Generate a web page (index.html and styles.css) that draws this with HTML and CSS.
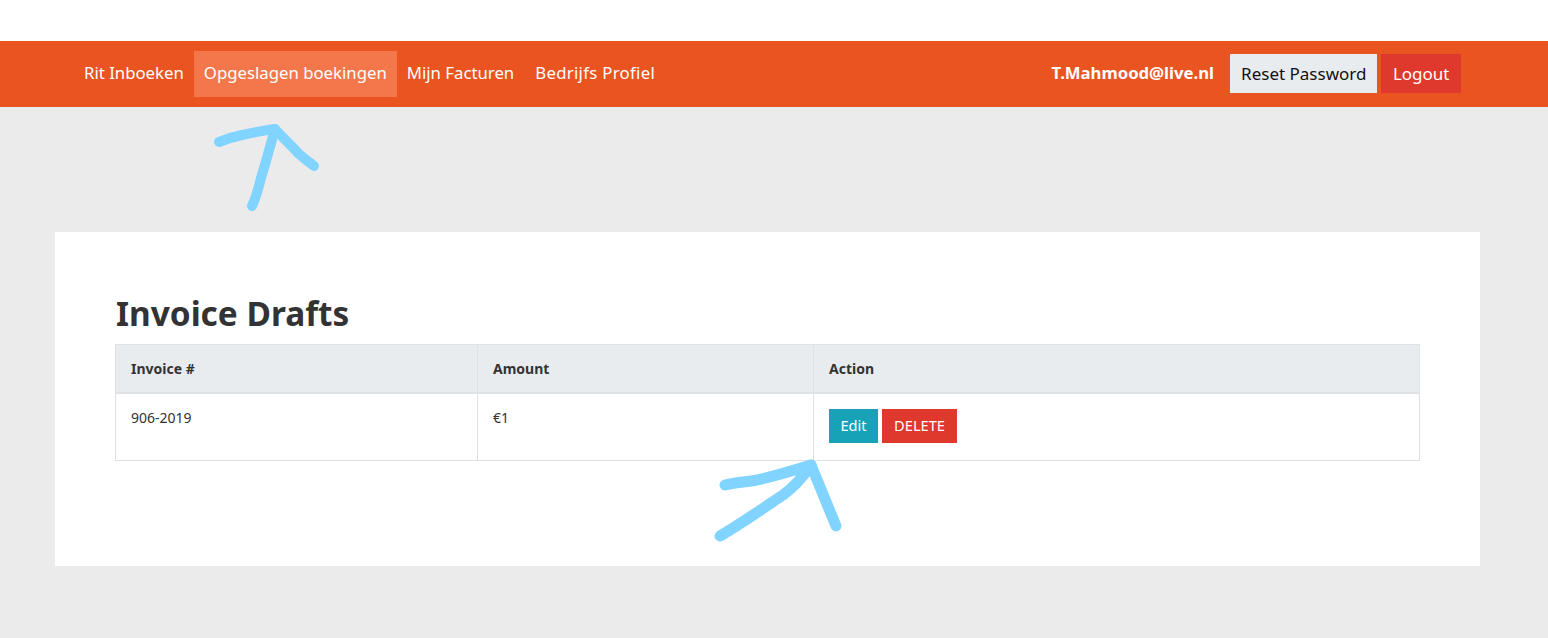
FILE: index.html
```html
<!DOCTYPE html>
<html lang="nl">
<head>
<meta charset="utf-8">
<title>Invoice Drafts</title>
<link rel="stylesheet" href="styles.css">
</head>
<body>
<div class="topstrip"></div>
<nav class="navbar">
  <ul class="nav-links">
    <li><a class="nav-link" href="#">Rit Inboeken</a></li>
    <li><a class="nav-link active" href="#">Opgeslagen boekingen</a></li>
    <li><a class="nav-link" href="#">Mijn Facturen</a></li>
    <li><a class="nav-link nav-link-wide" href="#">Bedrijfs Profiel</a></li>
  </ul>
  <div class="nav-user">
    <strong class="user-email">T.Mahmood@live.nl</strong>
    <button class="btn btn-reset">Reset Password</button>
    <button class="btn btn-logout">Logout</button>
  </div>
</nav>
<main class="page">
  <section class="card">
    <h1 class="title">Invoice Drafts</h1>
    <table class="table">
      <colgroup>
        <col class="col-invoice"><col class="col-amount"><col>
      </colgroup>
      <thead>
        <tr><th>Invoice #</th><th>Amount</th><th>Action</th></tr>
      </thead>
      <tbody>
        <tr>
          <td>906-2019</td>
          <td>€1</td>
          <td class="actions">
            <button class="btn-sm btn-edit">Edit</button>
            <button class="btn-sm btn-delete">DELETE</button>
          </td>
        </tr>
      </tbody>
    </table>
  </section>
</main>
<svg class="annotation" width="1548" height="638" viewBox="0 0 1548 638" fill="none" stroke="#80d4ff" stroke-linecap="round" stroke-linejoin="round" stroke-width="10" aria-hidden="true">
  <path d="M219 142C224 140 232 137 242 135C252 133 264 130 275 129C270 147 265 165 261 178C258 190 256 198 252 206"/>
  <path d="M275 129C282 137 290 144 297 152C303 158 308 161 314 166"/>
  <path class="thick" d="M725 485C733 483 745 482 757 480C775 476 795 470 811 465C803 477 794 487 783 495C765 507 742 523 720 536"/>
  <path class="thick" d="M811 465L836 526"/>
</svg>
</body>
</html>
```
FILE: styles.css
```css
* { box-sizing: border-box; }
html, body { margin: 0; padding: 0; }
body {
  position: relative;
  height: 638px;
  overflow: hidden;
  background: #ebebeb;
  font-family: "Noto Sans", "Open Sans", sans-serif;
  color: #333;
}
.topstrip { height: 41px; background: #fff; }
.navbar {
  height: 66px;
  background: #e95420;
  display: flex;
  align-items: center;
  justify-content: space-between;
  padding: 0 87px 0 74px;
}
.nav-links { display: flex; list-style: none; margin: 0; padding: 0; }
.nav-link {
  display: block;
  height: 46px;
  line-height: 44px;
  padding: 0 10px;
  color: #fff;
  font-size: 16.75px;
  text-decoration: none;
  white-space: nowrap;
}
.nav-link-wide { letter-spacing: 0.3px; padding-left: 11px; }
.nav-link.active { background: #f4774c; }
.nav-user { display: flex; align-items: center; margin-top: -1px; }
.user-email { color: #fff; font-size: 16.7px; font-weight: 700; margin-right: 16px; margin-top: -3px; }
.btn {
  height: 39px;
  border: 0;
  padding: 0 11px;
  font: inherit;
  font-size: 17px;
  line-height: 37px;
}
.btn-reset { background: #e9ecef; color: #111; margin-right: 4px; }
.btn-logout { background: #df382c; color: #fff; padding: 0 11.5px; }
.page { padding: 125px 68px 0 55px; }
.card {
  height: 334px;
  background: #fff;
  padding: 60px 60px 0;
}
.title { margin: 0 0 10px 1px; font-size: 33.4px; line-height: 42px; font-weight: 700; color: #333; }
.table {
  width: 1305px;
  border-collapse: collapse;
  table-layout: fixed;
  font-size: 14px;
  color: #333;
}
.col-invoice { width: 362px; }
.col-amount { width: 336px; }
.table th, .table td {
  border: 1px solid #dee2e6;
  padding: 14px 15px;
  text-align: left;
  vertical-align: top;
  line-height: 19px;
}
.table th { background: #e9ecef; border-bottom-width: 2px; font-weight: 700; height: 48px; }
.table td { height: 67px; }
.table td.actions { padding-top: 15px; padding-bottom: 15px; }
.btn-sm {
  height: 34px;
  border: 0;
  padding: 0 0 2px;
  font: inherit;
  font-size: 14.6px;
  line-height: 30px;
  color: #fff;
  vertical-align: top;
}
.actions { font-size: 0; }
.btn-edit { background: #17a2b8; margin-right: 4px; width: 49px; }
.btn-delete { background: #df382c; width: 75px; }
.annotation { position: absolute; left: 0; top: 0; pointer-events: none; }
.thick { stroke-width: 11; }
```
